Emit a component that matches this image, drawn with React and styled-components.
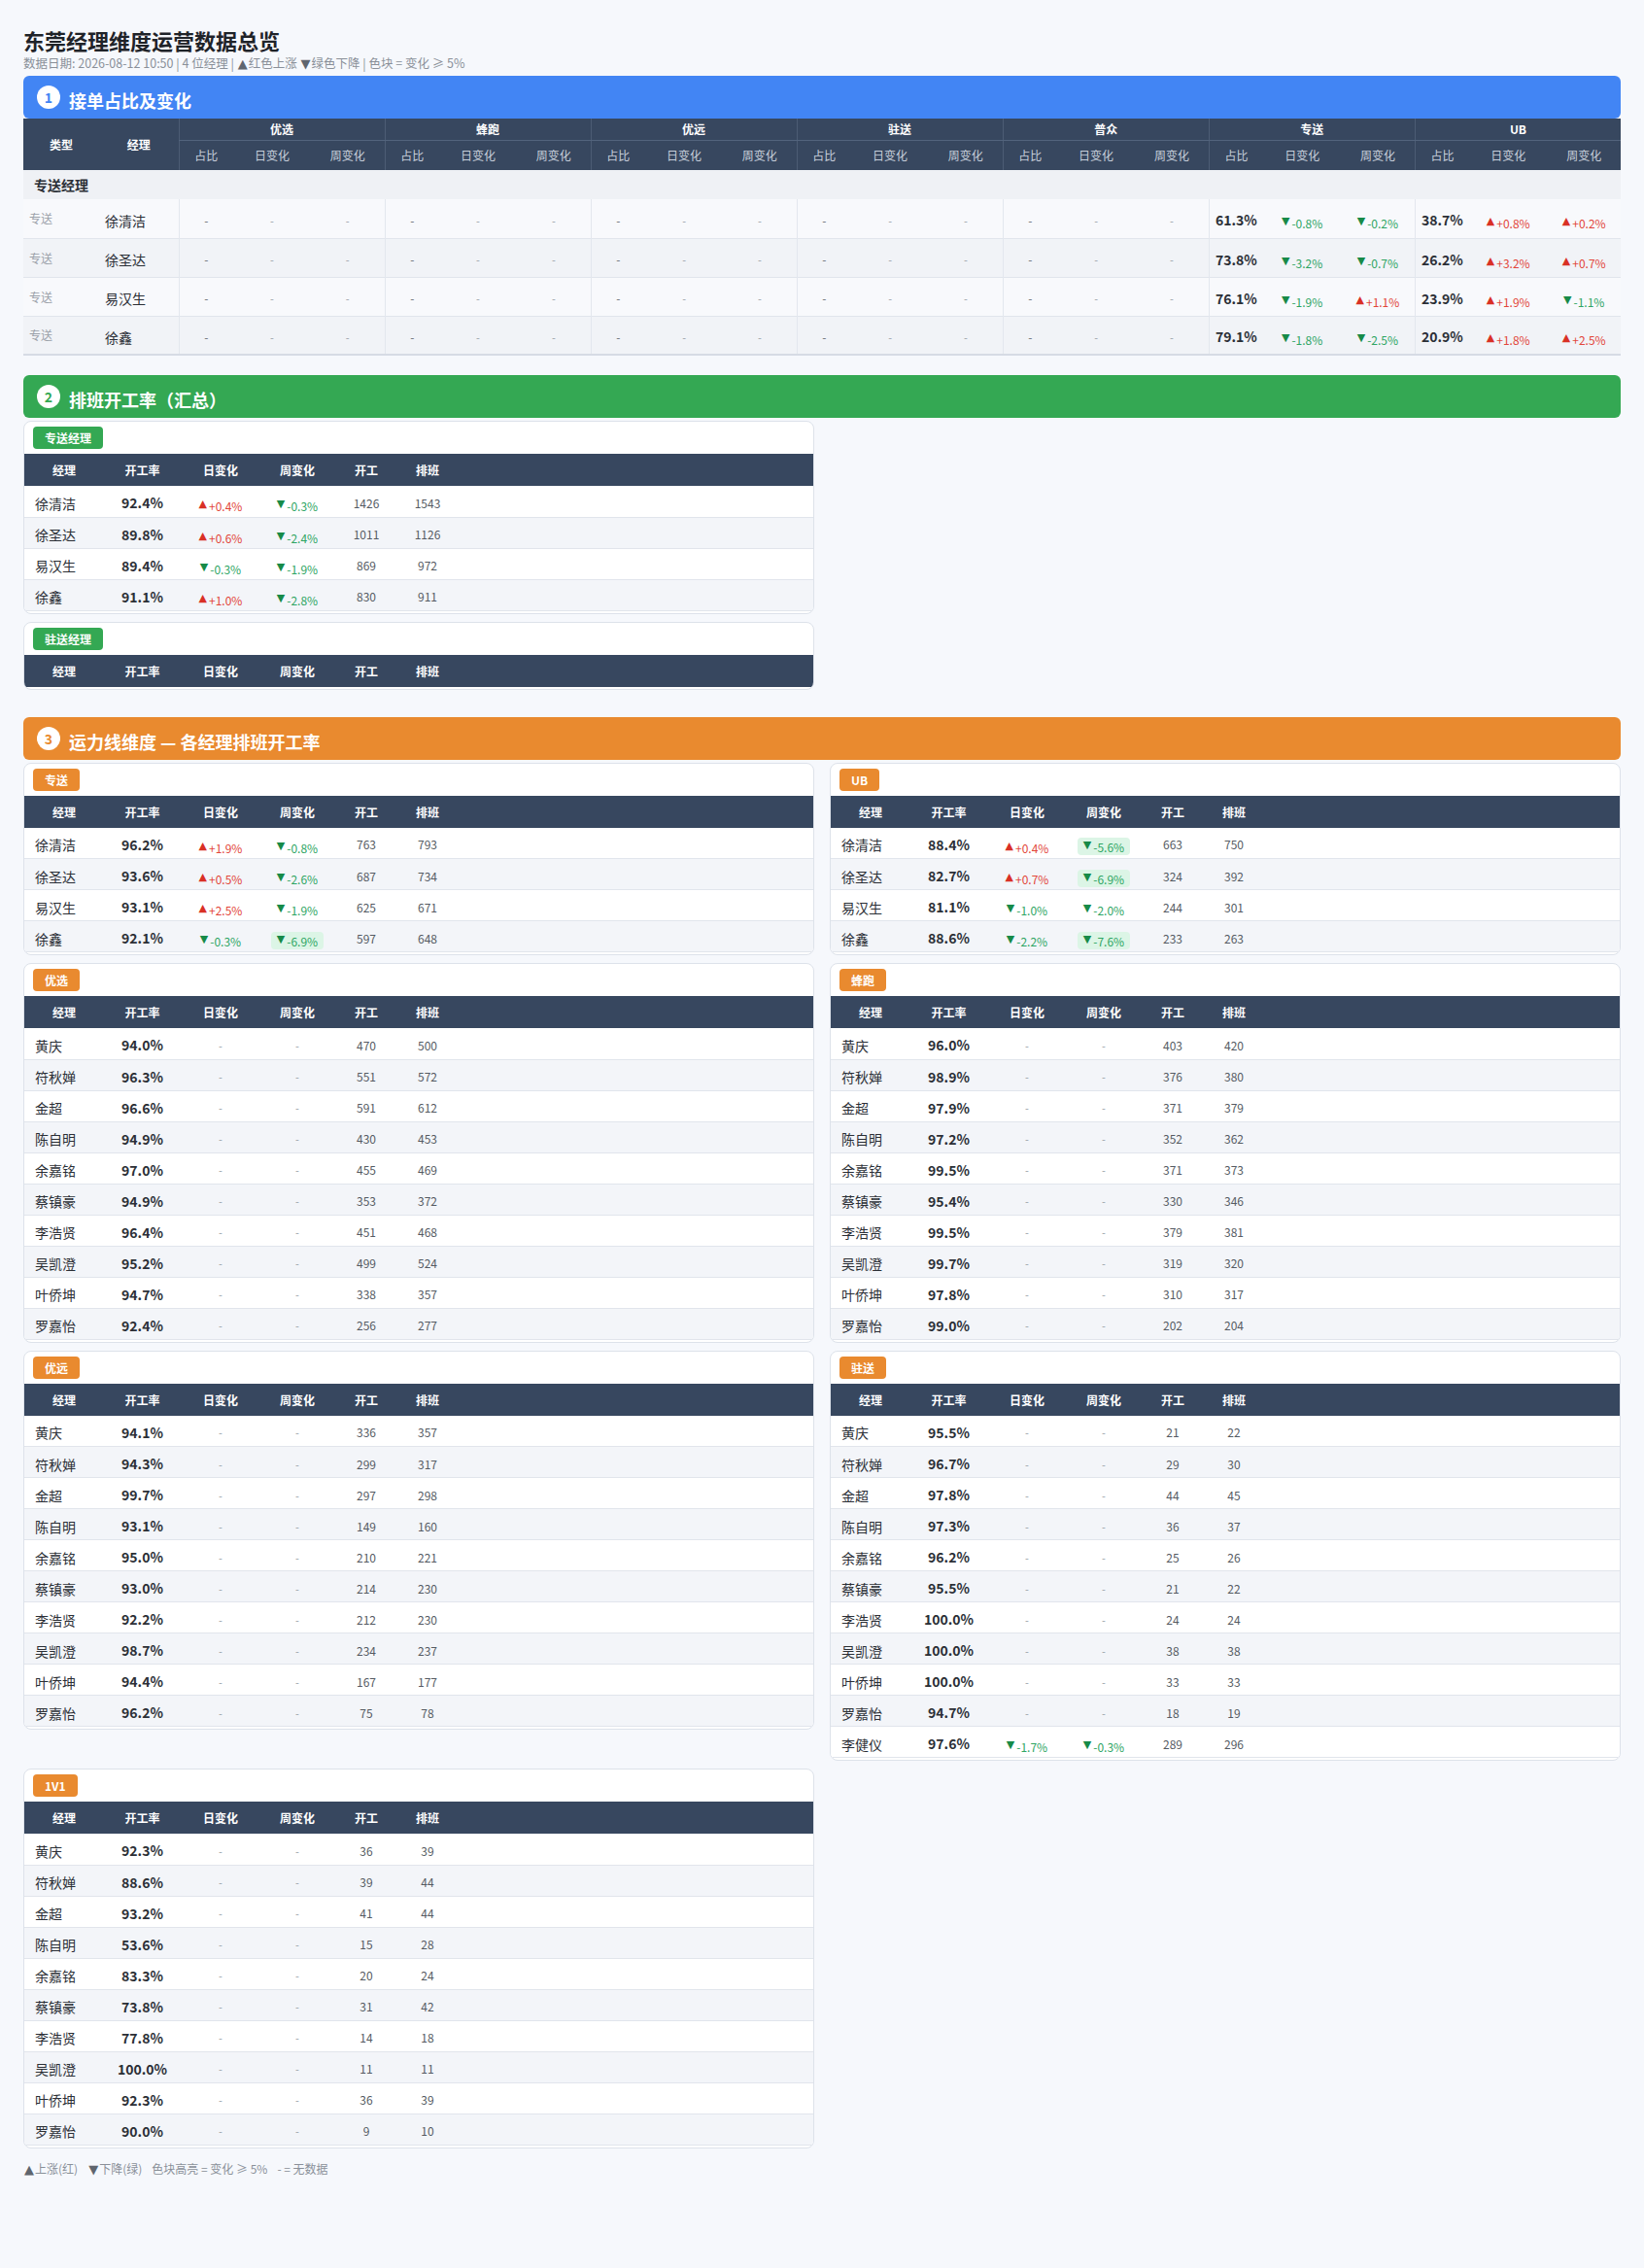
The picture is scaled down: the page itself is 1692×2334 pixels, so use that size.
import React from "react";
import styled, { createGlobalStyle } from "styled-components";

const BLUE = "#4285f4";
const GREEN = "#34a853";
const ORANGE = "#e98a2f";
const SLATE = "#37475f";

const GlobalStyle = createGlobalStyle`
  html, body {
    margin: 0;
    padding: 0;
    background: #f6f8fc;
  }
  body {
    font-family: "Noto Sans CJK SC", "Noto Sans", sans-serif;
    color: #2b2f36;
  }
  * {
    box-sizing: border-box;
  }
`;

// ---------- data ----------

const LINES = ["优选", "蜂跑", "优远", "驻送", "普众", "专送", "UB"];

const shareRows = [
  { name: "徐清洁", 专送: [61.3, -0.8, -0.2], UB: [38.7, 0.8, 0.2] },
  { name: "徐圣达", 专送: [73.8, -3.2, -0.7], UB: [26.2, 3.2, 0.7] },
  { name: "易汉生", 专送: [76.1, -1.9, 1.1], UB: [23.9, 1.9, -1.1] },
  { name: "徐鑫", 专送: [79.1, -1.8, -2.5], UB: [20.9, 1.8, 2.5] },
];

const r = (name, rate, day, week, work, plan) => ({ name, rate, day, week, work, plan });

const zsManagers = [
  r("徐清洁", 92.4, 0.4, -0.3, 1426, 1543),
  r("徐圣达", 89.8, 0.6, -2.4, 1011, 1126),
  r("易汉生", 89.4, -0.3, -1.9, 869, 972),
  r("徐鑫", 91.1, 1.0, -2.8, 830, 911),
];

const simple = (list) => list.map(([n, rate, w, p]) => r(n, rate, null, null, w, p));

const lineCards = [
  {
    label: "专送",
    rows: [
      r("徐清洁", 96.2, 1.9, -0.8, 763, 793),
      r("徐圣达", 93.6, 0.5, -2.6, 687, 734),
      r("易汉生", 93.1, 2.5, -1.9, 625, 671),
      r("徐鑫", 92.1, -0.3, -6.9, 597, 648),
    ],
  },
  {
    label: "UB",
    rows: [
      r("徐清洁", 88.4, 0.4, -5.6, 663, 750),
      r("徐圣达", 82.7, 0.7, -6.9, 324, 392),
      r("易汉生", 81.1, -1.0, -2.0, 244, 301),
      r("徐鑫", 88.6, -2.2, -7.6, 233, 263),
    ],
  },
  {
    label: "优选",
    rows: simple([
      ["黄庆", 94.0, 470, 500],
      ["符秋婵", 96.3, 551, 572],
      ["金超", 96.6, 591, 612],
      ["陈自明", 94.9, 430, 453],
      ["余嘉铭", 97.0, 455, 469],
      ["蔡镇豪", 94.9, 353, 372],
      ["李浩贤", 96.4, 451, 468],
      ["吴凯澄", 95.2, 499, 524],
      ["叶侨坤", 94.7, 338, 357],
      ["罗嘉怡", 92.4, 256, 277],
    ]),
  },
  {
    label: "蜂跑",
    rows: simple([
      ["黄庆", 96.0, 403, 420],
      ["符秋婵", 98.9, 376, 380],
      ["金超", 97.9, 371, 379],
      ["陈自明", 97.2, 352, 362],
      ["余嘉铭", 99.5, 371, 373],
      ["蔡镇豪", 95.4, 330, 346],
      ["李浩贤", 99.5, 379, 381],
      ["吴凯澄", 99.7, 319, 320],
      ["叶侨坤", 97.8, 310, 317],
      ["罗嘉怡", 99.0, 202, 204],
    ]),
  },
  {
    label: "优远",
    rows: simple([
      ["黄庆", 94.1, 336, 357],
      ["符秋婵", 94.3, 299, 317],
      ["金超", 99.7, 297, 298],
      ["陈自明", 93.1, 149, 160],
      ["余嘉铭", 95.0, 210, 221],
      ["蔡镇豪", 93.0, 214, 230],
      ["李浩贤", 92.2, 212, 230],
      ["吴凯澄", 98.7, 234, 237],
      ["叶侨坤", 94.4, 167, 177],
      ["罗嘉怡", 96.2, 75, 78],
    ]),
  },
  {
    label: "驻送",
    rows: [
      ...simple([
        ["黄庆", 95.5, 21, 22],
        ["符秋婵", 96.7, 29, 30],
        ["金超", 97.8, 44, 45],
        ["陈自明", 97.3, 36, 37],
        ["余嘉铭", 96.2, 25, 26],
        ["蔡镇豪", 95.5, 21, 22],
        ["李浩贤", 100.0, 24, 24],
        ["吴凯澄", 100.0, 38, 38],
        ["叶侨坤", 100.0, 33, 33],
        ["罗嘉怡", 94.7, 18, 19],
      ]),
      r("李健仪", 97.6, -1.7, -0.3, 289, 296),
    ],
  },
  {
    label: "1V1",
    rows: simple([
      ["黄庆", 92.3, 36, 39],
      ["符秋婵", 88.6, 39, 44],
      ["金超", 93.2, 41, 44],
      ["陈自明", 53.6, 15, 28],
      ["余嘉铭", 83.3, 20, 24],
      ["蔡镇豪", 73.8, 31, 42],
      ["李浩贤", 77.8, 14, 18],
      ["吴凯澄", 100.0, 11, 11],
      ["叶侨坤", 92.3, 36, 39],
      ["罗嘉怡", 90.0, 9, 10],
    ]),
  },
];

// ---------- page ----------

const Page = styled.div`
  padding: 27px 24px 40px;
`;

const Title = styled.h1`
  margin: 0;
  font-size: 22px;
  line-height: 29px;
  font-weight: 700;
  color: #1f2329;
`;

const Subtitle = styled.div`
  margin: 0 0 4px;
  font-size: 12.5px;
  line-height: 17px;
  color: #8a9099;
`;

const Section = styled.section`
  margin-bottom: ${(p) => p.$tail ?? 20}px;
`;

const Banner = styled.div`
  display: flex;
  align-items: center;
  gap: 9px;
  height: 44px;
  padding: 0 14px;
  margin-bottom: ${(p) => p.$gap ?? 3}px;
  background: ${(p) => p.$color};
  border-radius: 6px;
  color: #fff;
`;

const Num = styled.span`
  width: 24px;
  height: 24px;
  border-radius: 50%;
  background: #fff;
  color: ${(p) => p.$color};
  display: flex;
  align-items: center;
  justify-content: center;
  font-size: 14px;
  font-weight: 700;
`;

const BannerText = styled.span`
  font-size: 18px;
  font-weight: 700;
  line-height: 1;
  padding-top: 6px;
`;

// ---------- changes ----------

const ChangeTag = styled.span`
  display: inline-flex;
  align-items: flex-start;
  font-size: 12px;
  line-height: 15px;
  color: ${(p) => (p.$up ? "#e2463a" : "#2fa564")};
  padding: ${(p) => (p.$hl ? "2px 6px 1px" : "0")};
  border-radius: 4px;
  background: ${(p) => (p.$hl ? (p.$up ? "#fde7e5" : "#dcf5e6") : "transparent")};
`;

const Tri = styled.span`
  font-family: "DejaVu Sans", sans-serif;
  font-size: 11px;
  line-height: 11px;
  margin-right: 2px;
  color: ${(p) => (p.$up ? "#d93025" : "#178a48")};
`;

const Dash = styled.span`
  font-size: 11px;
  color: #9aa0a8;
`;

const Change = ({ v }) => {
  if (v == null) return <Dash>-</Dash>;
  const up = v > 0;
  return (
    <ChangeTag $up={up} $hl={Math.abs(v) >= 5}>
      <Tri $up={up}>{up ? "▲" : "▼"}</Tri>
      {up ? "+" : ""}
      {v.toFixed(1)}%
    </ChangeTag>
  );
};

// ---------- share table (section 1) ----------

const ShareTable = styled.table`
  width: 100%;
  table-layout: fixed;
  border-collapse: collapse;
`;

const GroupHead = styled.th`
  background: ${SLATE};
  color: #fff;
  font-size: 12px;
  font-weight: 700;
  text-align: center;
  padding: 0;
  height: 22px;
  border-left: 1px solid #4c5c74;
  border-bottom: 1px solid #52637c;
`;

const FixedHead = styled.th`
  background: ${SLATE};
  color: #fff;
  font-size: 12px;
  font-weight: 700;
  text-align: center;
  padding: 0;
`;

const SubHead = styled.th`
  background: ${SLATE};
  color: #c7cfdb;
  font-size: 12px;
  font-weight: 400;
  text-align: center;
  padding: 0;
  height: 31px;
  border-left: ${(p) => (p.$first ? "1px solid #4c5c74" : "none")};
`;

const GroupRow = styled.td`
  background: #eff1f5;
  height: 30px;
  padding: 0 11px;
  font-size: 14px;
  font-weight: 700;
  color: #2b2f36;
`;

const ShareRow = styled.tr`
  background: ${(p) => (p.$alt ? "#f1f3f7" : "#f8f9fc")};
  border-bottom: 1px solid #e1e5ec;

  &:last-child {
    border-bottom: 2px solid #d6dbe4;
  }
`;

const TypeCell = styled.td`
  height: 40px;
  padding: 0 6px;
  font-size: 12px;
  color: #9aa0a8;
`;

const NameCell = styled.td`
  padding: 4px ${(p) => p.$pad ?? 6}px 0;
  font-size: 14px;
  color: #2b2f36;
  white-space: nowrap;
`;

const ValCell = styled.td`
  padding: 0;
  text-align: center;
  border-left: ${(p) => (p.$first ? "1px solid #e3e7ee" : "none")};
  white-space: nowrap;
`;

const Pct = styled.span`
  display: inline-block;
  padding-top: 4px;
  font-size: 14px;
  font-weight: 700;
  color: #2b2f36;
`;

const ShareDash = styled.span`
  display: inline-block;
  padding-top: 4px;
  font-size: 12px;
  color: #6b7078;
`;

const ShareSection = () => (
  <ShareTable>
    <colgroup>
      <col style={{ width: 78 }} />
      <col style={{ width: 82 }} />
      {LINES.map((l) => (
        <React.Fragment key={l}>
          <col style={{ width: 56 }} />
          <col style={{ width: 80 }} />
          <col style={{ width: 76 }} />
        </React.Fragment>
      ))}
    </colgroup>
    <thead>
      <tr>
        <FixedHead rowSpan={2}>类型</FixedHead>
        <FixedHead rowSpan={2}>经理</FixedHead>
        {LINES.map((l) => (
          <GroupHead key={l} colSpan={3}>
            {l}
          </GroupHead>
        ))}
      </tr>
      <tr>
        {LINES.map((l) => (
          <React.Fragment key={l}>
            <SubHead $first>占比</SubHead>
            <SubHead>日变化</SubHead>
            <SubHead>周变化</SubHead>
          </React.Fragment>
        ))}
      </tr>
    </thead>
    <tbody>
      <tr>
        <GroupRow colSpan={2 + LINES.length * 3}>专送经理</GroupRow>
      </tr>
      {shareRows.map((row, i) => (
        <ShareRow key={row.name} $alt={i % 2 === 1}>
          <TypeCell>专送</TypeCell>
          <NameCell>{row.name}</NameCell>
          {LINES.map((l) => {
            const d = row[l];
            return (
              <React.Fragment key={l}>
                <ValCell $first>{d ? <Pct>{d[0].toFixed(1)}%</Pct> : <ShareDash>-</ShareDash>}</ValCell>
                <ValCell>
                  <Change v={d ? d[1] : null} />
                </ValCell>
                <ValCell>
                  <Change v={d ? d[2] : null} />
                </ValCell>
              </React.Fragment>
            );
          })}
        </ShareRow>
      ))}
    </tbody>
  </ShareTable>
);

// ---------- rate cards (sections 2, 3) ----------

const HalfColumn = styled.div`
  width: calc(50% - 8px);
  display: flex;
  flex-direction: column;
  gap: 8px;
  padding-bottom: 8px;
`;

const CardGrid = styled.div`
  display: grid;
  grid-template-columns: 1fr 1fr;
  column-gap: 16px;
  row-gap: 8px;
  align-items: start;
  padding-bottom: 8px;
`;

const Card = styled.div`
  background: #fff;
  border: 1px solid #dde2ea;
  border-radius: 8px;
  overflow: hidden;
  padding: 5px 0 2px;
`;

const BadgeRow = styled.div`
  padding: 0 9px 5px;
  line-height: 0;
`;

const Badge = styled.span`
  display: inline-block;
  height: 23px;
  line-height: 23px;
  padding: 0 12px;
  border-radius: 4px;
  background: ${(p) => p.$color};
  color: #fff;
  font-size: 12px;
  font-weight: 700;
`;

const RateTable = styled.table`
  width: 100%;
  table-layout: fixed;
  border-collapse: collapse;
`;

const RateHead = styled.th`
  height: 33px;
  background: ${SLATE};
  color: #fff;
  font-size: 12px;
  font-weight: 700;
  text-align: center;
  padding: 0;
`;

const RateRow = styled.tr`
  background: ${(p) => (p.$alt ? "#f3f5f9" : "#fff")};
  border-bottom: 1px solid #e1e5ec;
`;

const RateCell = styled.td`
  height: 32px;
  padding: 0;
  text-align: center;
  white-space: nowrap;
`;

const Count = styled.span`
  font-size: 12px;
  color: #555b63;
`;

const RATE_COLS = [82, 79, 82, 76, 66, 60];

const RateCard = ({ label, color, rows }) => (
  <Card>
    <BadgeRow>
      <Badge $color={color}>{label}</Badge>
    </BadgeRow>
    <RateTable>
      <colgroup>
        {RATE_COLS.map((w, i) => (
          <col key={i} style={{ width: w }} />
        ))}
        <col />
      </colgroup>
      <thead>
        <tr>
          {["经理", "开工率", "日变化", "周变化", "开工", "排班", ""].map((h, i) => (
            <RateHead key={i}>{h}</RateHead>
          ))}
        </tr>
      </thead>
      <tbody>
        {rows.map((row, i) => (
          <RateRow key={row.name} $alt={i % 2 === 1}>
            <NameCell $pad={11}>{row.name}</NameCell>
            <RateCell>
              <Pct>{row.rate.toFixed(1)}%</Pct>
            </RateCell>
            <RateCell>
              <Change v={row.day} />
            </RateCell>
            <RateCell>
              <Change v={row.week} />
            </RateCell>
            <RateCell>
              <Count>{row.work}</Count>
            </RateCell>
            <RateCell>
              <Count>{row.plan}</Count>
            </RateCell>
            <RateCell />
          </RateRow>
        ))}
      </tbody>
    </RateTable>
  </Card>
);

// ---------- footer ----------

const Legend = styled.div`
  display: flex;
  gap: 10px;
  margin-top: 4px;
  font-size: 12px;
  line-height: 17px;
  color: #8a9099;
`;

const Mark = styled.span`
  color: #5f656e;
  font-family: "DejaVu Sans", sans-serif;
  font-size: 13px;
  margin: 0 1px;
`;

export default function App() {
  return (
    <>
      <GlobalStyle />
      <Page>
        <Title>东莞经理维度运营数据总览</Title>
        <Subtitle>
          数据日期: 2026-08-12 10:50 | 4 位经理 | <Mark>▲</Mark>红色上涨 <Mark>▼</Mark>绿色下降 | 色块 = 变化 ≥ 5%
        </Subtitle>

        <Section>
          <Banner $color={BLUE} $gap={0}>
            <Num $color={BLUE}>1</Num>
            <BannerText>接单占比及变化</BannerText>
          </Banner>
          <ShareSection />
        </Section>

        <Section>
          <Banner $color={GREEN}>
            <Num $color={GREEN}>2</Num>
            <BannerText>排班开工率（汇总）</BannerText>
          </Banner>
          <HalfColumn>
            <RateCard label="专送经理" color={GREEN} rows={zsManagers} />
            <RateCard label="驻送经理" color={GREEN} rows={[]} />
          </HalfColumn>
        </Section>

        <Section $tail={0}>
          <Banner $color={ORANGE}>
            <Num $color={ORANGE}>3</Num>
            <BannerText>运力线维度 — 各经理排班开工率</BannerText>
          </Banner>
          <CardGrid>
            {lineCards.map((c) => (
              <RateCard key={c.label} label={c.label} color={ORANGE} rows={c.rows} />
            ))}
          </CardGrid>
        </Section>

        <Legend>
          <span>
            <Mark>▲</Mark>上涨(红)
          </span>
          <span>
            <Mark>▼</Mark>下降(绿)
          </span>
          <span>色块高亮 = 变化 ≥ 5%</span>
          <span>- = 无数据</span>
        </Legend>
      </Page>
    </>
  );
}
